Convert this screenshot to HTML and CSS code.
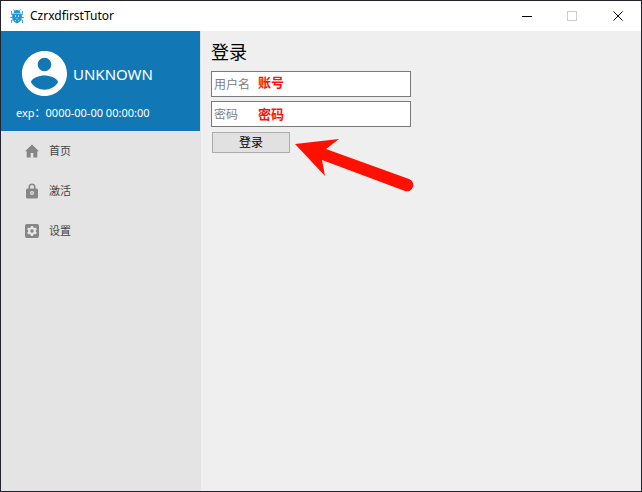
FILE: index.html
```html
<!DOCTYPE html>
<html lang="zh-CN">
<head>
  <meta charset="UTF-8">
  <meta name="viewport" content="width=device-width, initial-scale=1.0">
  <title>CzrxdfirstTutor</title>
  <link rel="stylesheet" href="styles.css">
</head>
<body>
  <div class="window">
    <header class="titlebar">
      <svg class="logo" viewBox="0 0 16 16" aria-hidden="true">
        <path class="legs" d="M6 3.500 4.500 1.500M10 3.500 11.500 1.500M4 6.500H2.500V3M12 6.500H13.500V3M4 9.500H1M12 9.500H15M4.500 12H2.500V15M11.500 12H13.500V15"/>
        <path class="shell" d="M4.500 5Q5 2 8 2T11.500 5ZM3.500 5.500H12.500L13 9Q12.500 13.500 8 15.500Q3.500 13.500 3 9Z"/>
        <path class="marks" d="M6 7h1v2H6zM9 7h1v2H9zM7.500 10h1v1h-1zM6 12h1v1H6zM9 12h1v1H9z"/>
      </svg>
      <span class="title">CzrxdfirstTutor</span>
      <button class="win-btn" type="button" aria-label="最小化">
        <svg viewBox="0 0 11 11"><path d="M1 5.500H11"/></svg>
      </button>
      <button class="win-btn" type="button" aria-label="最大化" disabled>
        <svg viewBox="0 0 11 11"><path d="M.5 .5H9.500V9.500H.5Z"/></svg>
      </button>
      <button class="win-btn" type="button" aria-label="关闭">
        <svg viewBox="0 0 11 11"><path d="M.5 .5 9.500 9.500M9.500 .5 .5 9.500"/></svg>
      </button>
    </header>

    <div class="content">
      <aside class="sidebar">
        <div class="profile">
          <div class="user">
            <svg class="avatar" viewBox="2 2 20 20" aria-hidden="true">
              <path d="M12 2C6.480 2 2 6.480 2 12s4.480 10 10 10 10-4.480 10-10S17.520 2 12 2zm0 3c1.660 0 3 1.340 3 3s-1.340 3-3 3-3-1.340-3-3 1.340-3 3-3zm0 14.200c-2.500 0-4.710-1.280-6-3.220.03-1.990 4-3.080 6-3.080 1.990 0 5.970 1.090 6 3.080-1.290 1.940-3.500 3.220-6 3.220z"/>
            </svg>
            <span class="name">UNKNOWN</span>
          </div>
          <div class="exp">exp：0000-00-00 00:00:00</div>
        </div>
        <nav class="menu">
          <a href="#home">
            <svg viewBox="0 0 16 16" aria-hidden="true"><path d="M8 1.500 1 8.200h1.700V14.500h4V10h2.600v4.500h4V8.200H15z"/></svg>
            首页
          </a>
          <a href="#activate">
            <svg viewBox="0 0 16 16" aria-hidden="true"><path fill-rule="evenodd" d="M4.500 5.500V4a3.500 3.500 0 0 1 7 0v1.500H12.500A1.500 1.500 0 0 1 14 7v7a1.500 1.500 0 0 1-1.500 1.500h-9A1.500 1.500 0 0 1 2 14V7a1.500 1.500 0 0 1 1.500-1.500zM6 5.500h4V4a2 2 0 0 0-4 0zM8 8a2 2 0 1 0 0 4 2 2 0 0 0 0-4zM8 9.200a.8.8 0 1 1 0 1.600.8.8 0 0 1 0-1.600z"/></svg>
            激活
          </a>
          <a href="#settings">
            <svg viewBox="0 0 16 16" aria-hidden="true">
              <rect x="1" y="1" width="14" height="14" rx="2"/>
              <path class="gear" d="M7 3h2l.4 1.500 1 .6 1.500-.5 1 1.800L11.800 7.500v1L12.900 9.600l-1 1.800-1.500-.5-1 .6L9 13H7l-.4-1.500-1-.6-1.500.5-1-1.800L4.200 8.500v-1L3.100 6.400l1-1.800 1.500.5 1-.6z"/>
              <circle cx="8" cy="8" r="1.700"/>
            </svg>
            设置
          </a>
        </nav>
      </aside>

      <main>
        <h1>登录</h1>
        <form class="login">
          <div class="field">
            <input type="text" placeholder="用户名" aria-label="用户名">
            <span class="note note-user">账号</span>
          </div>
          <div class="field">
            <input type="password" placeholder="密码" aria-label="密码">
            <span class="note">密码</span>
          </div>
          <div class="submit">
            <button type="button">登录</button>
            <svg class="arrow" viewBox="0 0 120 54" aria-hidden="true">
              <path d="M0 6 44 1 31 11 114 41A6 6 0 0 1 110 53L27 22 30 38Z"/>
            </svg>
          </div>
        </form>
      </main>
    </div>
  </div>
</body>
</html>
```

FILE: styles.css
```css
:root {
  --blue: #1177b5;
  --side: #e4e4e4;
  --bg: #efefef;
  --icon: #868686;
  --red: #ff1000;
}

* {
  box-sizing: border-box;
}

body {
  margin: 0;
  font-family: "Noto Sans", "Noto Sans CJK SC", sans-serif;
  font-size: 12px;
  color: #000;
}

button, input {
  font: inherit;
}

.window {
  display: flex;
  flex-direction: column;
  min-height: 100vh;
  border: 1px solid #23232d;
  background: var(--bg);
}

.titlebar {
  display: flex;
  align-items: center;
  height: 30px;
  padding-left: 8px;
  background: #fff;
}

.logo {
  width: 16px;
  height: 16px;
  margin-right: 5px;
}

.logo .legs {
  fill: none;
  stroke: #4aa9dc;
}

.logo .shell {
  fill: #2196d6;
}

.logo .marks {
  fill: #b5e0f5;
}

.title {
  flex: 1;
  font-size: 12px;
  line-height: 16px;
}

.win-btn {
  display: flex;
  align-items: center;
  justify-content: center;
  width: 46px;
  height: 30px;
  padding: 0;
  border: 0;
  background: none;
}

.win-btn svg {
  width: 11px;
  height: 11px;
  fill: none;
  stroke: #000;
}

.win-btn:disabled svg {
  stroke: #ccc;
}

.content {
  display: flex;
  flex: 1;
}

.sidebar {
  width: 200px;
  border-right: 1px solid var(--side);
  background: var(--side);
}

.profile {
  height: 100px;
  padding: 20px 15px 0;
  background: var(--blue);
  color: #fff;
}

.user {
  display: flex;
  align-items: center;
  gap: 6px;
  padding-left: 6px;
}

.avatar {
  width: 45px;
  height: 45px;
  fill: #fff;
}

.name {
  font-size: 15px;
  line-height: 18px;
}

.exp {
  margin-top: 8px;
  font-size: 11px;
  line-height: 18px;
}

.menu a {
  display: flex;
  align-items: center;
  gap: 9px;
  height: 40px;
  padding-left: 23px;
  font-size: 11px;
  line-height: 16px;
  color: #444;
  text-decoration: none;
}

.menu svg {
  width: 16px;
  height: 16px;
  fill: var(--icon);
}

.menu .gear {
  fill: var(--side);
}

main {
  flex: 1;
  padding: 8px 10px;
}

h1 {
  margin: 0 0 6px;
  font-size: 18px;
  font-weight: normal;
  line-height: 26px;
}

.login {
  display: flex;
  flex-direction: column;
  gap: 4px;
}

.field {
  position: relative;
  width: 200px;
}

.field input {
  display: block;
  width: 100%;
  height: 26px;
  padding: 0 2px;
  border: 1px solid #7a7a7a;
  border-radius: 0;
  background: #fff;
}

.field input::placeholder {
  color: #808080;
}

/* red hints lie over the inputs */
.note {
  position: absolute;
  top: 4px;
  left: 47px;
  font-size: 13px;
  font-weight: bold;
  line-height: 18px;
  color: var(--red);
  pointer-events: none;
}

.note-user {
  top: 2px;
}

.submit {
  position: relative;
  padding: 1px;
}

.submit button {
  display: block;
  width: 78px;
  height: 21px;
  padding: 0;
  border: 1px solid #adadad;
  background: #e1e1e1;
  line-height: 19px;
}

.arrow {
  position: absolute;
  top: 7px;
  left: 84px;
  width: 120px;
  height: 54px;
  fill: var(--red);
}
```
